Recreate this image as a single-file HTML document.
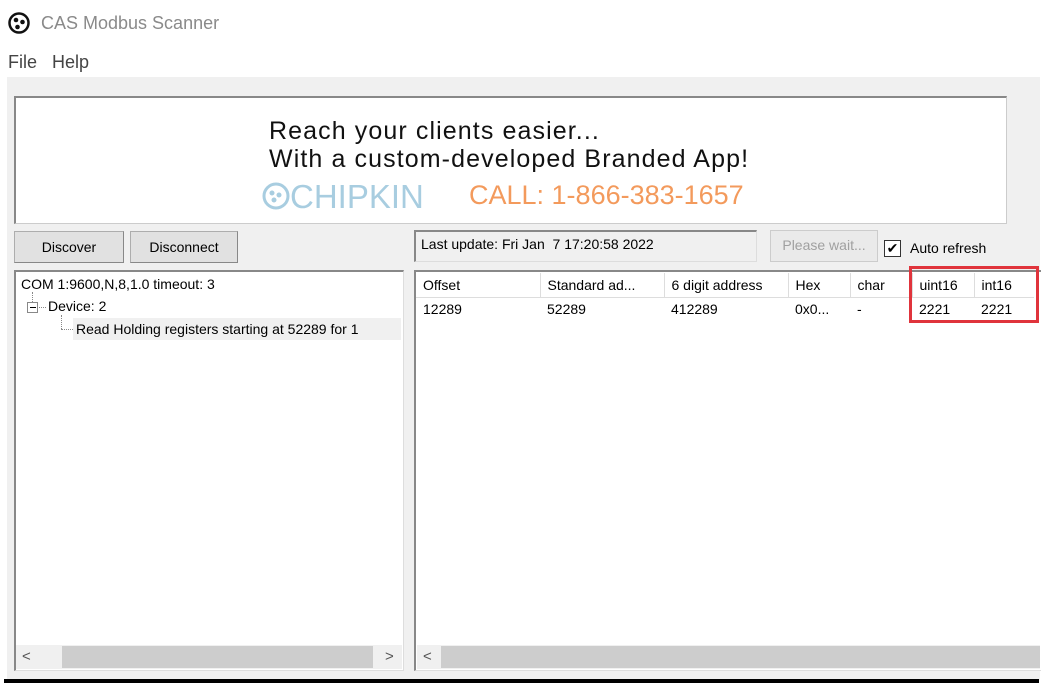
<!DOCTYPE html>
<html><head><meta charset="utf-8"><style>
*{margin:0;padding:0;box-sizing:border-box}
body{width:1051px;height:690px;background:#fff;position:relative;overflow:hidden;font-family:"Liberation Sans",sans-serif;font-size:14px;color:#000}
.a{position:absolute}
.btn{position:absolute;background:#e1e1e1;border:1px solid #adadad;border-right-color:#888;border-bottom-color:#888;text-align:center;font-size:14px;line-height:28px}
.sunk{border-top:2px solid #888;border-left:2px solid #888;border-right:1px solid #ddd;border-bottom:1px solid #ddd}
td{padding:0 0 0 7px;height:24px;white-space:nowrap}
</style></head><body>
<svg class="a" style="left:8px;top:12px" width="22" height="22" viewBox="0 0 22 22"><circle cx="11" cy="11" r="9.5" fill="#fff" stroke="#111" stroke-width="2.5"/><circle cx="8" cy="8" r="2.3" fill="#111"/><circle cx="14.5" cy="10" r="2.3" fill="#111"/><circle cx="9.5" cy="15" r="2.3" fill="#111"/></svg>
<div class="a" style="left:41px;top:13px;font-size:18px;color:#8a8a8a">CAS Modbus Scanner</div>
<div class="a" style="left:8px;top:52px;font-size:18px;color:#444">File&nbsp;&nbsp;&nbsp;Help</div>
<div class="a" style="left:7px;top:77px;width:1033px;height:603px;background:#f0f0f0"></div>
<div class="a sunk" style="left:14px;top:96px;width:993px;height:128px;background:#fff;border-right:1px solid #ccc;border-bottom:1px solid #ccc"></div>
<div class="a" style="left:269px;top:117px;font-size:25px;line-height:28px;letter-spacing:1.1px;color:#111;white-space:nowrap">Reach your clients easier...<br>With a custom-developed Branded App!</div>
<svg class="a" style="left:262px;top:182px" width="28" height="28" viewBox="0 0 28 28"><circle cx="14" cy="14" r="12" fill="none" stroke="#a8cde0" stroke-width="3"/><circle cx="10" cy="11" r="2.5" fill="#a8cde0"/><circle cx="17" cy="13" r="2.5" fill="#a8cde0"/><circle cx="12" cy="18" r="2.5" fill="#a8cde0"/></svg>
<div class="a" style="left:290px;top:178px;font-size:33px;color:#a8cde0;letter-spacing:0">CHIPKIN</div>
<div class="a" style="left:469px;top:180px;font-size:27px;color:#f39a5c">CALL: 1-866-383-1657</div>
<div class="btn" style="left:14px;top:231px;width:110px;height:32px;line-height:30px">Discover</div>
<div class="btn" style="left:130px;top:231px;width:108px;height:32px;line-height:30px">Disconnect</div>
<div class="a sunk" style="left:414px;top:230px;width:343px;height:32px;background:#f0f0f0"></div>
<div class="a" style="left:421px;top:236px">Last update: Fri Jan &nbsp;7 17:20:58 2022</div>
<div class="btn" style="left:770px;top:230px;width:108px;height:32px;color:#a0a0a0;border-color:#ccc;background:#eaeaea">Please wait...</div>
<div class="a" style="left:884px;top:240px;width:17px;height:17px;border:1px solid #333;background:#fff;font-size:14px;line-height:15px;text-align:center">✔</div>
<div class="a" style="left:910px;top:240px">Auto refresh</div>
<div class="a sunk" style="left:14px;top:270px;width:390px;height:401px;background:#fff"></div>
<div class="a" style="left:21px;top:276px">COM 1:9600,N,8,1.0 timeout: 3</div>
<div class="a" style="left:27px;top:302px;width:11px;height:11px;border:1px solid #888;background:#fff"></div>
<div class="a" style="left:30px;top:307px;width:6px;height:1px;background:#000"></div>
<div class="a" style="left:39px;top:307px;width:7px;border-top:1px dotted #888"></div>
<div class="a" style="left:32px;top:292px;height:10px;border-left:1px dotted #888"></div>
<div class="a" style="left:48px;top:298px">Device: 2</div>
<div class="a" style="left:61px;top:315px;height:14px;border-left:1px dotted #888"></div>
<div class="a" style="left:61px;top:329px;width:12px;border-top:1px dotted #888"></div>
<div class="a" style="left:73px;top:318px;width:328px;height:22px;background:#f0f0f0"></div>
<div class="a" style="left:76px;top:321px">Read Holding registers starting at 52289 for 1</div>
<div class="a" style="left:16px;top:645px;width:386px;height:24px;background:#f0f0f0"></div>
<div class="a" style="left:62px;top:646px;width:311px;height:22px;background:#cdcdcd"></div>
<div class="a" style="left:22px;top:648px;font-size:15px;color:#555">&lt;</div>
<div class="a" style="left:385px;top:648px;font-size:15px;color:#555">&gt;</div>
<div class="a sunk" style="left:414px;top:270px;width:627px;height:401px;background:#fff;border-right:none"></div>
<table class="a" style="left:416px;top:273px;border-collapse:collapse;font-size:14px">
<tr style="height:24px">
<td style="width:124px;border-right:1px solid #ddd;border-bottom:1px solid #ddd">Offset</td>
<td style="width:124px;border-right:1px solid #ddd;border-bottom:1px solid #ddd">Standard ad...</td>
<td style="width:124px;border-right:1px solid #ddd;border-bottom:1px solid #ddd">6 digit address</td>
<td style="width:62px;border-right:1px solid #ddd;border-bottom:1px solid #ddd">Hex</td>
<td style="width:62px;border-right:1px solid #ddd;border-bottom:1px solid #ddd">char</td>
<td style="width:62px;border-right:1px solid #ddd;border-bottom:1px solid #ddd">uint16</td>
<td style="width:60px;border-bottom:1px solid #ddd">int16</td></tr>
<tr><td>12289</td><td>52289</td><td>412289</td><td>0x0...</td><td>-</td><td>2221</td><td>2221</td></tr>
</table>
<div class="a" style="left:909px;top:266px;width:130px;height:57px;border:3px solid #e0343c"></div>
<div class="a" style="left:417px;top:645px;width:623px;height:24px;background:#f0f0f0"></div>
<div class="a" style="left:441px;top:646px;width:599px;height:22px;background:#cdcdcd"></div>
<div class="a" style="left:423px;top:648px;font-size:15px;color:#555">&lt;</div>
<div class="a" style="left:4px;top:679px;width:1035px;height:4px;background:#000"></div>
</body></html>
